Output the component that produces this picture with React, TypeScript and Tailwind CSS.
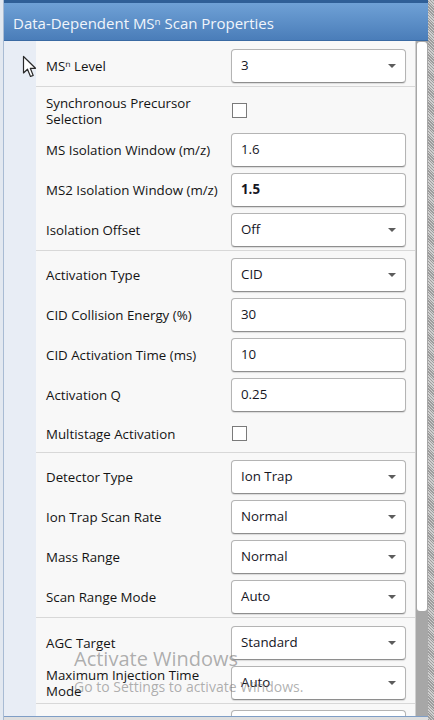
import React from 'react';

type Row =
  | { kind: 'select'; label: string; value: string }
  | { kind: 'input'; label: string; value: string; bold?: boolean }
  | { kind: 'check'; label: string; h: string };

interface Group {
  pt: string;
  rows: Row[];
}

const groups: Group[] = [
  {
    pt: 'pt-[5px]',
    rows: [{ kind: 'select', label: 'MSⁿ Level', value: '3' }],
  },
  {
    pt: 'pt-[4px]',
    rows: [
      { kind: 'check', label: 'Synchronous Precursor Selection', h: 'h-[39px]' },
      { kind: 'input', label: 'MS Isolation Window (m/z)', value: '1.6' },
      { kind: 'input', label: 'MS2 Isolation Window (m/z)', value: '1.5', bold: true },
      { kind: 'select', label: 'Isolation Offset', value: 'Off' },
    ],
  },
  {
    pt: 'pt-[4px]',
    rows: [
      { kind: 'select', label: 'Activation Type', value: 'CID' },
      { kind: 'input', label: 'CID Collision Energy (%)', value: '30' },
      { kind: 'input', label: 'CID Activation Time (ms)', value: '10' },
      { kind: 'input', label: 'Activation Q', value: '0.25' },
      { kind: 'check', label: 'Multistage Activation', h: 'h-[37px]' },
    ],
  },
  {
    pt: 'pt-[4px]',
    rows: [
      { kind: 'select', label: 'Detector Type', value: 'Ion Trap' },
      { kind: 'select', label: 'Ion Trap Scan Rate', value: 'Normal' },
      { kind: 'select', label: 'Mass Range', value: 'Normal' },
      { kind: 'select', label: 'Scan Range Mode', value: 'Auto' },
    ],
  },
  {
    pt: 'pt-[5px]',
    rows: [
      { kind: 'select', label: 'AGC Target', value: 'Standard' },
      { kind: 'select', label: 'Maximum Injection Time Mode', value: 'Auto' },
    ],
  },
  {
    // next row is scrolled out of view, only the top of its box shows
    pt: 'pt-[3px]',
    rows: [{ kind: 'input', label: '', value: '' }],
  },
];

const Caret = () => (
  <svg width="8" height="4" viewBox="0 0 8 4" className="shrink-0">
    <polygon points="0,0 8,0 4,4" fill="#5c5c5c" />
  </svg>
);

const PropRow: React.FC<{ row: Row }> = ({ row }) => {
  const h = row.kind === 'check' ? row.h : 'h-[40px]';
  return (
    <div className={`flex items-center ${h}`}>
      <div className="w-[195px] shrink-0 pl-[10px] text-[13.3px] leading-[16px] text-[#141414]">
        {row.label}
      </div>
      {row.kind === 'check' ? (
        <div className="w-[15px] h-[15px] ml-[1px] border-[1.5px] border-[#7a7a7a] bg-white" />
      ) : (
        <div className="w-[175px] h-[34px] flex items-center justify-between pl-[9px] pr-[9px] bg-white border border-[#b4b4b4] border-b-[#8e8e8e] rounded-[4px] shadow-[0_1px_1px_rgba(0,0,0,0.12)] text-[13.3px] text-[#16161f]">
          <span className={row.kind === 'input' && row.bold ? 'font-bold' : ''}>{row.value}</span>
          {row.kind === 'select' && <Caret />}
        </div>
      )}
    </div>
  );
};

export default function App() {
  return (
    <div className="relative w-[434px] h-[720px] overflow-hidden flex bg-[#dcdcdc] font-['Segoe_UI','Open_Sans',sans-serif]">
      {/* left window edge */}
      <div className="w-[4px] shrink-0 bg-[#e2e8f0] border-r border-[#a8bbd3]" />

      <div className="w-[424px] shrink-0 flex flex-col">
        {/* title bar */}
        <div className="h-[41px] shrink-0 flex items-center pl-[9px] border-t-[3px] border-[#2f5f97] border-b border-b-[#3a6aa3] bg-[linear-gradient(to_bottom,#6fa1d6,#4a7db9)]">
          <span className="text-[15px] text-[#f1f5fb] pt-[3px]">Data-Dependent MSⁿ Scan Properties</span>
        </div>

        <div className="flex flex-1 min-h-0">
          {/* gutter */}
          <div className="w-[32px] shrink-0 bg-[#e8edf5]" />

          {/* property grid */}
          <div className="w-[380px] shrink-0 bg-[#f8f8f8] border-r border-[#cfcfcf] overflow-hidden">
            {groups.map((g, gi) => (
              <div key={gi} className={`${g.pt} ${gi < groups.length - 1 ? 'border-b border-[#d8d8d8]' : ''}`}>
                {g.rows.map((r, ri) => (
                  <PropRow key={ri} row={r} />
                ))}
              </div>
            ))}
          </div>

          {/* scrollbar */}
          <div className="w-[12px] shrink-0 bg-[#a7a7a7] flex flex-col">
            <div className="h-[569px] mx-[1px] mt-[1px] bg-white rounded-[3px]" />
          </div>
        </div>

        <div className="h-[4px] shrink-0 border-t border-[#7f9ec6] bg-[#dedede]" />
      </div>

      {/* hatched right edge */}
      <div className="w-[6px] shrink-0 bg-[repeating-linear-gradient(45deg,#9c9c9c_0px,#9c9c9c_1px,#cfcfcf_1px,#cfcfcf_2px)]" />

      {/* mouse pointer */}
      <svg className="absolute left-[22px] top-[55px]" width="15" height="24" viewBox="0 0 15 24">
        <path d="M1.5 1.5 L1.5 18 L5.5 14.2 L8.5 21.5 L11.2 20.4 L8.3 13.3 L13.5 13.3 Z" fill="#ffffff" stroke="#2a2a2a" strokeWidth="1.2" strokeLinejoin="round" />
      </svg>

      {/* activation watermark */}
      <div className="absolute left-[74px] top-[649px] text-[20px] leading-[20px] text-[rgba(110,110,110,0.55)] pointer-events-none">
        Activate Windows
      </div>
      <div className="absolute left-[74px] top-[680px] text-[14px] leading-[14px] text-[rgba(110,110,110,0.55)] pointer-events-none">
        Go to Settings to activate Windows.
      </div>
    </div>
  );
}
